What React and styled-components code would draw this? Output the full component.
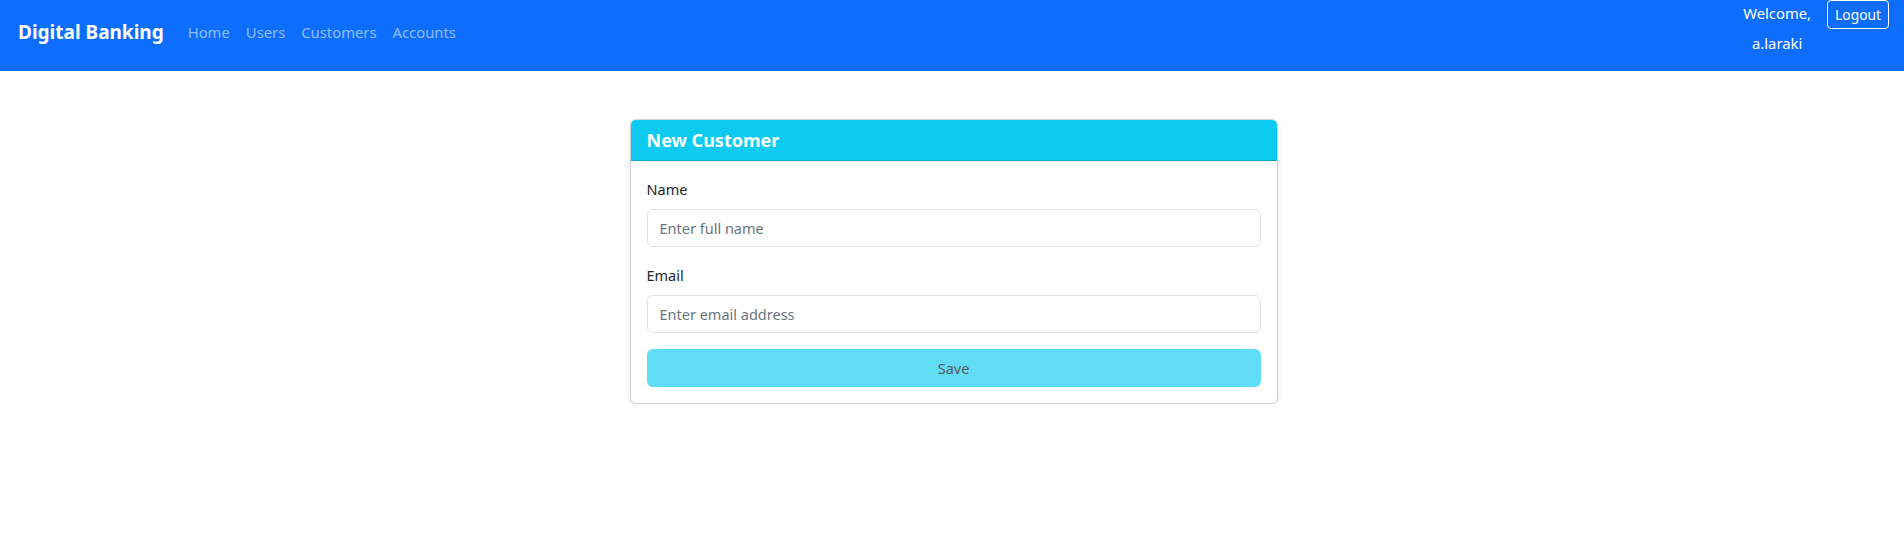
import styled, { createGlobalStyle } from "styled-components";

const GlobalStyle = createGlobalStyle`
  body {
    margin: 0;
    background: #fff;
    font-family: "Noto Sans", "Open Sans", sans-serif;
    color: #212529;
  }
`;

function App() {
  return (
    <>
      <GlobalStyle />
      <Navbar>
        <Brand>Digital Banking</Brand>
        <NavLinks>
          <NavLink>Home</NavLink>
          <NavLink>Users</NavLink>
          <NavLink>Customers</NavLink>
          <NavLink>Accounts</NavLink>
        </NavLinks>
        <UserBox>
          <Welcome>
            <span>Welcome,</span>
            <span>a.laraki</span>
          </Welcome>
          <LogoutButton>Logout</LogoutButton>
        </UserBox>
      </Navbar>
      <Main>
        <Card>
          <CardHeader>New Customer</CardHeader>
          <CardBody>
            <Field>
              <Label>Name</Label>
              <Input placeholder="Enter full name" />
            </Field>
            <Field>
              <Label>Email</Label>
              <Input placeholder="Enter email address" />
            </Field>
            <SaveButton disabled>Save</SaveButton>
          </CardBody>
        </Card>
      </Main>
    </>
  );
}

const Navbar = styled.nav`
  display: flex;
  align-items: flex-start;
  height: 71px;
  background: #0d6efd;
  padding: 0 15px 0 18px;
  box-sizing: border-box;
`;

const Brand = styled.div`
  margin-top: 17px;
  font-size: 19px;
  font-weight: 700;
  line-height: 30px;
  color: #fff;
  margin-right: 16px;
`;

const NavLinks = styled.div`
  display: flex;
  margin-top: 17px;
`;

const NavLink = styled.a`
  padding: 0 8px;
  font-size: 14.8px;
  line-height: 30px;
  color: rgba(255, 255, 255, 0.55);
  cursor: pointer;
`;

const UserBox = styled.div`
  margin-left: auto;
  display: flex;
  align-items: flex-start;
  gap: 16px;
`;

const Welcome = styled.div`
  display: flex;
  flex-direction: column;
  align-items: center;
  gap: 4px;
  font-size: 14.8px;
  line-height: 26px;
  color: #fff;
`;

const LogoutButton = styled.button`
  height: 29px;
  padding: 0 7px;
  background: transparent;
  border: 1px solid #fff;
  border-radius: 4px;
  color: #fff;
  font-family: inherit;
  font-size: 13.8px;
`;

const Main = styled.main`
  display: flex;
  justify-content: center;
  padding: 48px 0 0 3px;
`;

const Card = styled.section`
  width: 648px;
  border: 1px solid rgba(0, 0, 0, 0.175);
  border-radius: 6px;
  box-shadow: 0 2px 4px rgba(0, 0, 0, 0.1);
  overflow: hidden;
  box-sizing: border-box;
`;

const CardHeader = styled.h5`
  margin: 0;
  padding: 8px 16px;
  background: #0dcaf0;
  border-bottom: 1px solid rgba(0, 0, 0, 0.175);
  color: #fff;
  font-size: 18px;
  font-weight: 700;
  line-height: 24px;
`;

const CardBody = styled.div`
  padding: 16px;
`;

const Field = styled.div`
  margin-bottom: 16px;
`;

const Label = styled.label`
  display: block;
  margin-bottom: 8px;
  font-size: 14.5px;
  line-height: 24px;
  color: #212529;
`;

const Input = styled.input`
  display: block;
  width: 100%;
  height: 38px;
  box-sizing: border-box;
  padding: 0 12px;
  border: 1px solid #dee2e6;
  border-radius: 6px;
  font-family: inherit;
  font-size: 14.5px;
  color: #212529;
  &::placeholder {
    color: #6c757d;
  }
`;

const SaveButton = styled.button`
  display: block;
  width: 100%;
  height: 38px;
  border: none;
  border-radius: 6px;
  background: #0dcaf0;
  opacity: 0.65;
  color: #000;
  font-family: inherit;
  font-size: 14.5px;
`;

export default App;
